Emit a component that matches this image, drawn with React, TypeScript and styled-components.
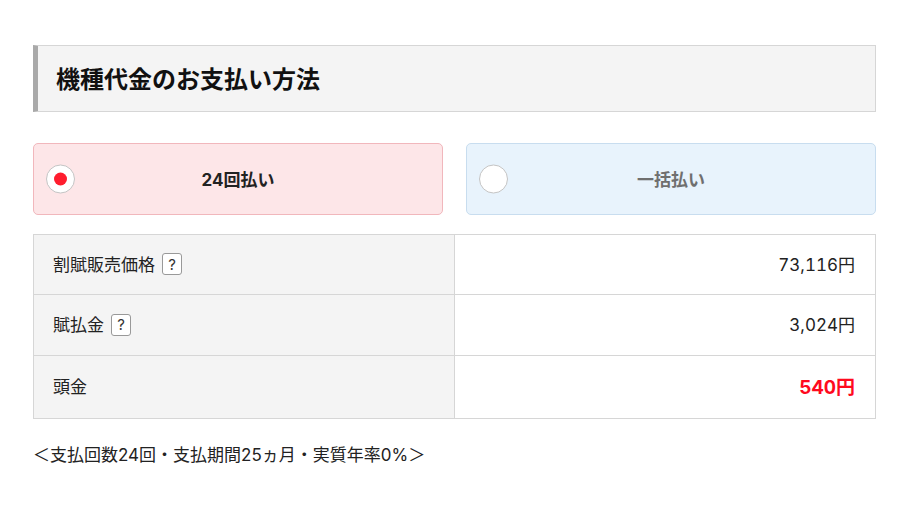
import React, { useState } from "react";
import styled, { createGlobalStyle } from "styled-components";

const Global = createGlobalStyle`
  html, body { margin: 0; padding: 0; background: #fff; }
  body {
    font-family: "Inter", "Noto Sans CJK JP", sans-serif;
    color: #222;
  }
`;

const Page = styled.div`
  padding: 45px 24px 0 33px;
  width: 843px;
`;

const Heading = styled.h2`
  margin: 0;
  height: 63px;
  padding: 0 0 2px 18px;
  box-sizing: content-box;
  display: flex;
  align-items: center;
  background: #f4f4f4;
  border: 1px solid #d6d6d6;
  border-left: 5px solid #a9a9a9;
  font-size: 24px;
  font-weight: bold;
  color: #111;
`;

const Choices = styled.div`
  display: grid;
  grid-template-columns: 1fr 1fr;
  gap: 23px;
  margin-top: 31px;
`;

const Choice = styled.label<{ $tone: "red" | "blue" }>`
  position: relative;
  height: 68px;
  padding-bottom: 2px;
  display: flex;
  align-items: center;
  justify-content: center;
  border-radius: 5px;
  border: 1px solid ${(p) => (p.$tone === "red" ? "#f1b7bc" : "#c8ddef")};
  background: ${(p) => (p.$tone === "red" ? "#fde6e8" : "#e8f3fc")};
  cursor: pointer;
`;

const Radio = styled.span<{ $on: boolean }>`
  position: absolute;
  left: 12px;
  top: 50%;
  transform: translateY(-50%);
  width: 27px;
  height: 27px;
  border-radius: 50%;
  background: #fff;
  border: 1px solid #c4c4c4;
  display: flex;
  align-items: center;
  justify-content: center;
  &::after {
    content: "";
    width: 13px;
    height: 13px;
    border-radius: 50%;
    background: #ff1d2e;
    display: ${(p) => (p.$on ? "block" : "none")};
  }
`;

const ChoiceText = styled.span<{ $on: boolean }>`
  font-size: 17px;
  font-weight: bold;
  color: ${(p) => (p.$on ? "#222" : "#6f6f6f")};
`;

const Table = styled.div`
  margin-top: 19px;
  display: grid;
  grid-template-columns: 421px 1fr;
  border: 1px solid #d6d6d6;
`;

const Label = styled.div<{ $first?: boolean; $h: number }>`
  height: ${(p) => p.$h - 3}px;
  padding: 0 0 3px 19px;
  display: flex;
  align-items: center;
  gap: 7px;
  background: #f4f4f4;
  border-right: 1px solid #d6d6d6;
  border-top: ${(p) => (p.$first ? "none" : "1px solid #d6d6d6")};
  font-size: 17px;
  color: #222;
`;

const Value = styled.div<{ $first?: boolean; $accent?: boolean }>`
  display: flex;
  align-items: center;
  justify-content: flex-end;
  padding: 0 20px 3px 0;
  background: #fff;
  border-top: ${(p) => (p.$first ? "none" : "1px solid #d6d6d6")};
  font-size: ${(p) => (p.$accent ? "19px" : "17px")};
  font-weight: ${(p) => (p.$accent ? "bold" : "normal")};
  font-variant-numeric: tabular-nums;
  color: ${(p) => (p.$accent ? "#ff0a1e" : "#222")};
`;

const Help = styled.span`
  display: inline-flex;
  align-items: center;
  justify-content: center;
  width: 20px;
  height: 22px;
  margin-top: 2px;
  box-sizing: border-box;
  border: 1px solid #999;
  border-radius: 3px;
  font-size: 15px;
  color: #333;
  background: #fff;
`;

const Note = styled.p`
  margin: 22px 0 0 0;
  font-size: 17px;
  color: #222;
`;

const rows = [
  { label: "割賦販売価格", help: true, value: "73,116円", h: 59 },
  { label: "賦払金", help: true, value: "3,024円", h: 60 },
  { label: "頭金", help: false, value: "540円", accent: true, h: 62 },
];

export default function App() {
  const [sel, setSel] = useState<"24" | "1">("24");
  return (
    <>
      <Global />
      <Page>
        <Heading>機種代金のお支払い方法</Heading>
        <Choices>
          <Choice $tone="red" onClick={() => setSel("24")}>
            <Radio $on={sel === "24"} />
            <ChoiceText $on={true}>24回払い</ChoiceText>
          </Choice>
          <Choice $tone="blue" onClick={() => setSel("1")}>
            <Radio $on={sel === "1"} />
            <ChoiceText $on={false}>一括払い</ChoiceText>
          </Choice>
        </Choices>
        <Table>
          {rows.map((r, i) => (
            <React.Fragment key={r.label}>
              <Label $first={i === 0} $h={r.h}>
                {r.label}
                {r.help && <Help>?</Help>}
              </Label>
              <Value $first={i === 0} $accent={r.accent}>
                {r.value}
              </Value>
            </React.Fragment>
          ))}
        </Table>
        <Note>＜支払回数24回・支払期間25ヵ月・実質年率0%＞</Note>
      </Page>
    </>
  );
}
